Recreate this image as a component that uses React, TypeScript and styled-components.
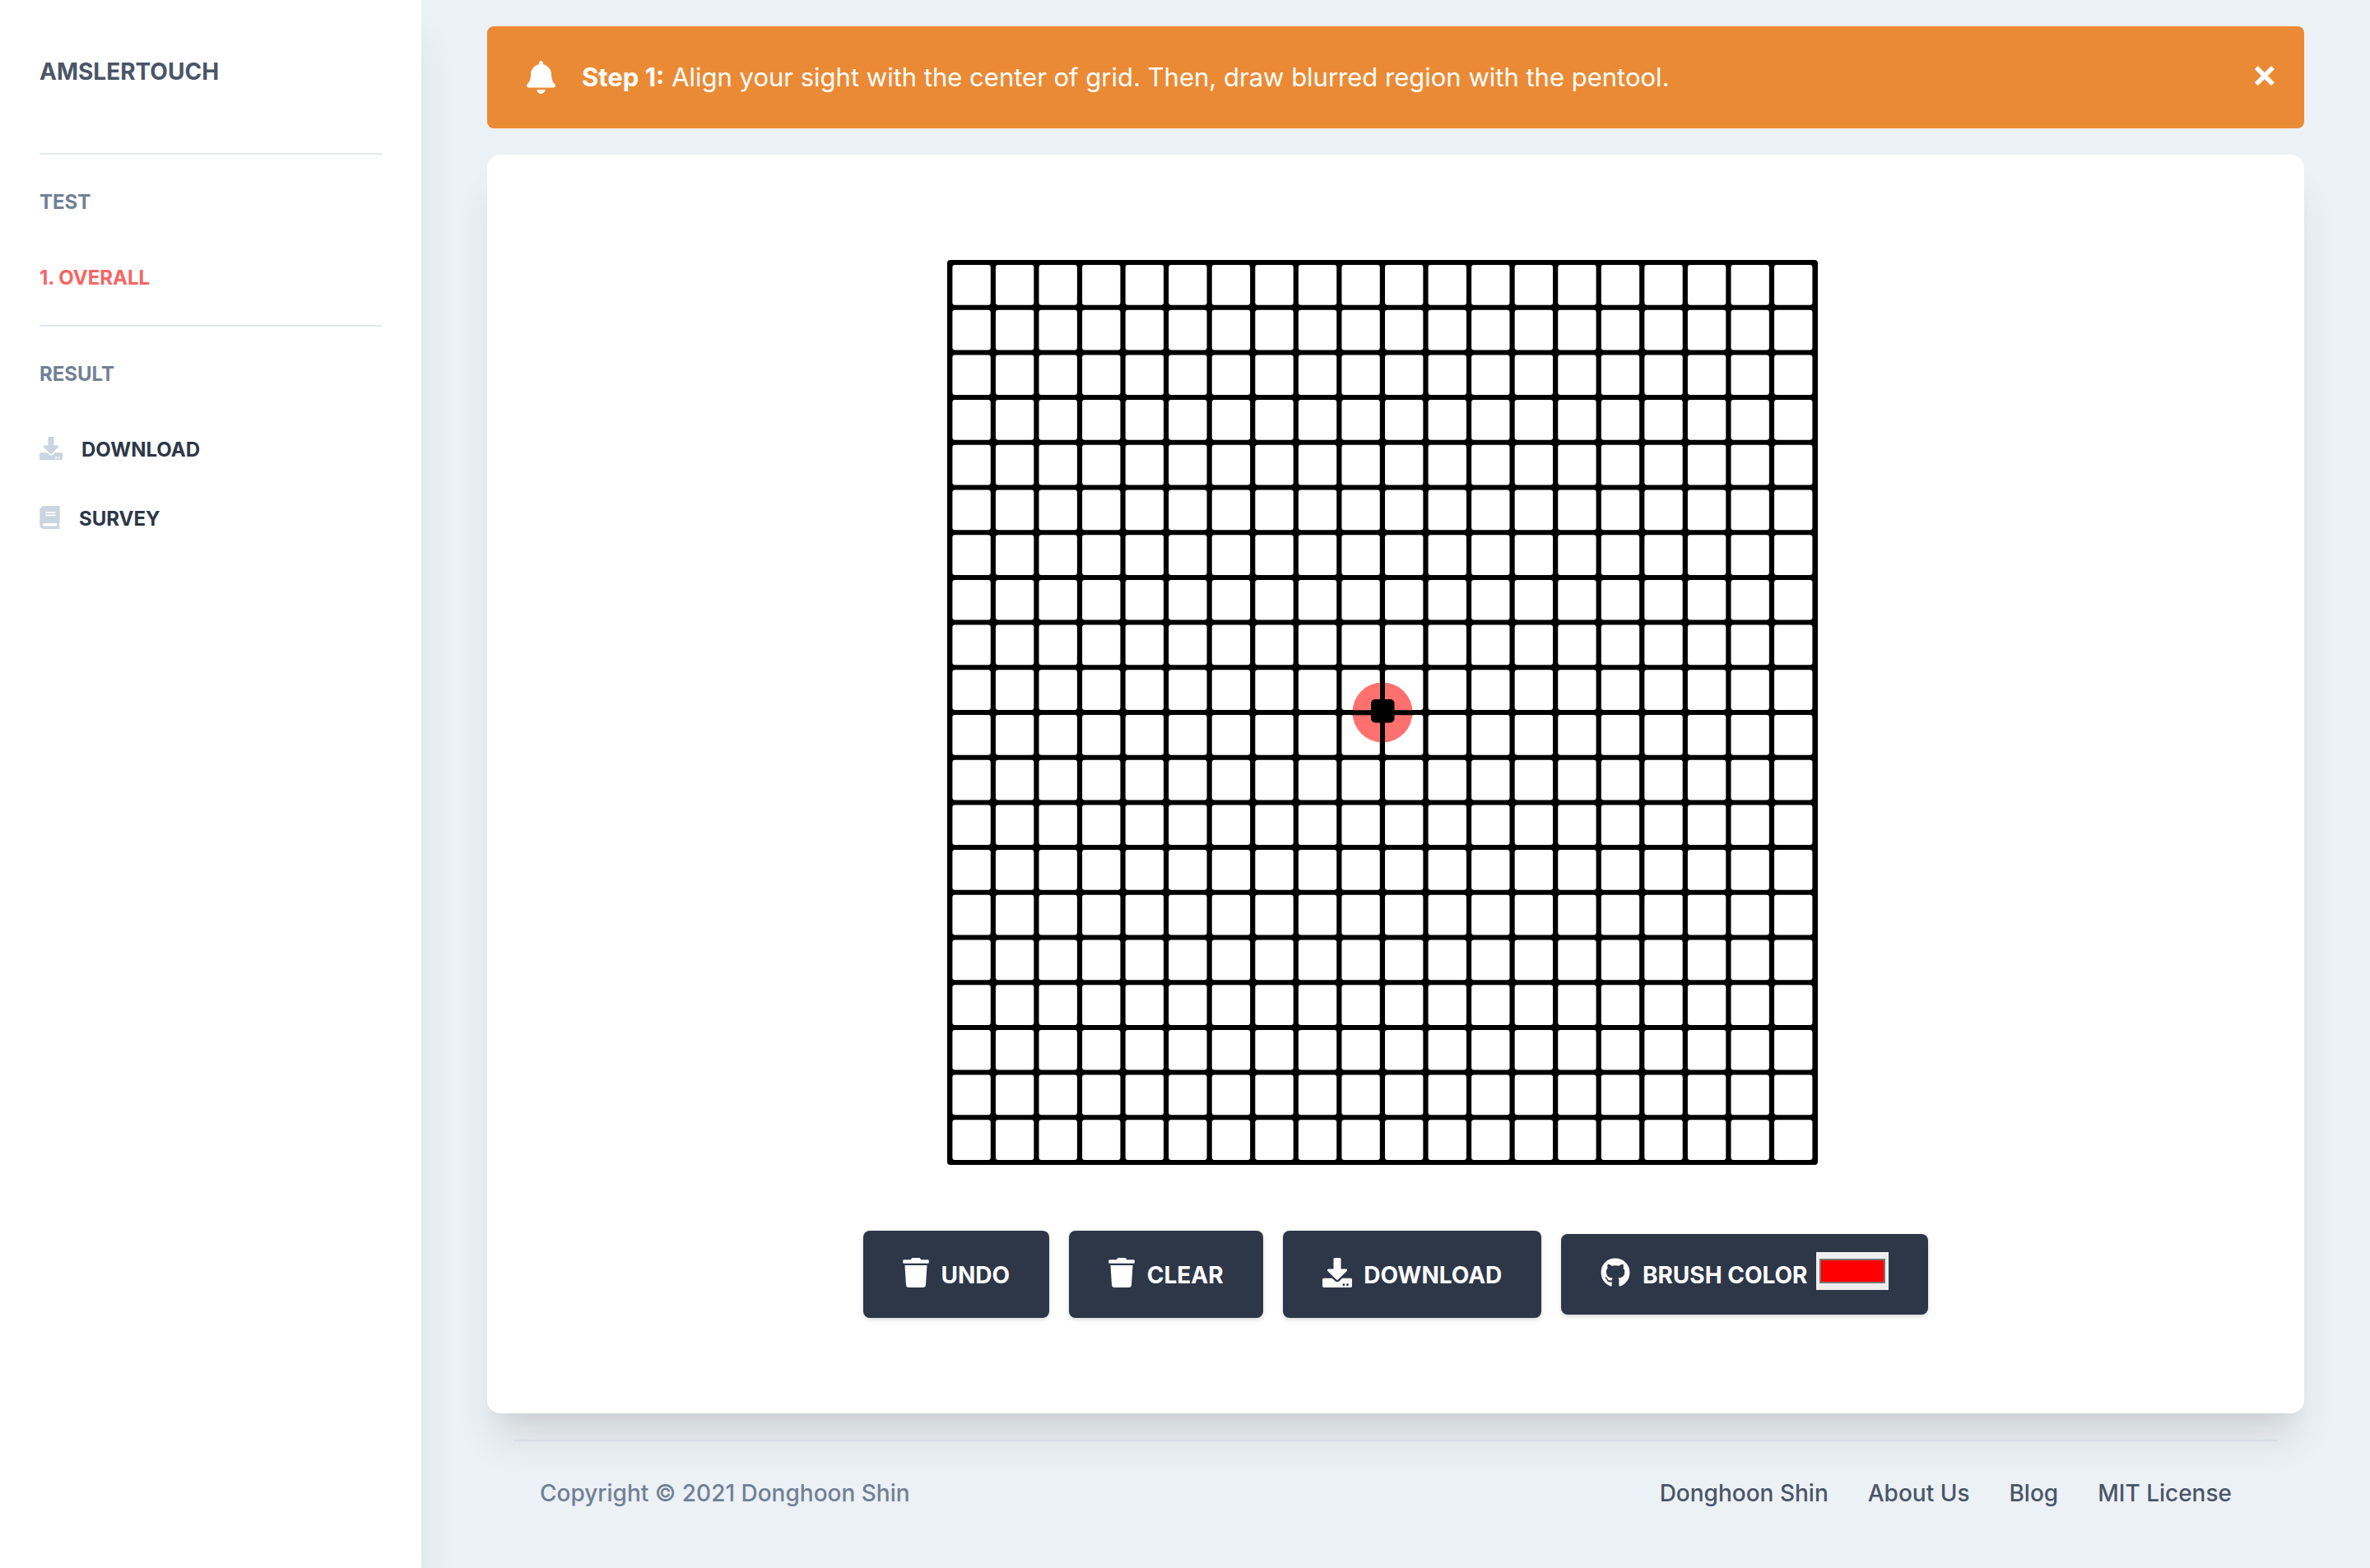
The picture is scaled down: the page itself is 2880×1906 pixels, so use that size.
import React, { useState } from "react";
import styled, { createGlobalStyle } from "styled-components";
import { FaBell, FaBook, FaDownload, FaGithub, FaTrash } from "react-icons/fa";

const GlobalStyle = createGlobalStyle`
  *, *::before, *::after { box-sizing: border-box; }
  body {
    margin: 0;
    background: #ecf1f5;
    color: #2d3748;
    font-family: Inter, "Liberation Sans", sans-serif;
    font-size: 28px;
    line-height: 42px;
  }
`;

const xlShadow = "0 40px 50px -10px rgba(0, 0, 0, 0.1), 0 20px 20px -10px rgba(0, 0, 0, 0.04)";

const Page = styled.div`
  display: flex;
  min-height: 100vh;
`;

const Sidebar = styled.nav`
  flex: none;
  width: 512px;
  padding: 66px 48px 32px;
  background: #fff;
  box-shadow: ${xlShadow};
`;

const Brand = styled.a`
  display: block;
  padding-bottom: 78px;
  color: #4a5568;
  font-weight: 700;
  text-decoration: none;
  text-transform: uppercase;
`;

const Divider = styled.hr<{ $color?: string }>`
  margin: 0;
  border: 0;
  border-top: 2px solid ${(p) => p.$color ?? "#e2e8f0"};
`;

const NavHeading = styled.h6`
  margin: 0;
  padding: 40px 0 32px;
  color: #718096;
  font-size: 24px;
  font-weight: 700;
  line-height: 36px;
  text-transform: uppercase;
`;

const NavList = styled.ul`
  margin: 0;
  padding: 0 0 15px;
  list-style: none;
`;

const NavLink = styled.a<{ $active?: boolean; $iconWidth?: number }>`
  display: flex;
  align-items: center;
  gap: 23px;
  padding: 24px 0;
  color: ${(p) => (p.$active ? "#f56565" : "#2d3748")};
  font-size: 24px;
  font-weight: 700;
  line-height: 36px;
  text-decoration: none;
  text-transform: uppercase;

  svg {
    width: ${(p) => p.$iconWidth ?? 28}px;
    height: 28px;
    margin-bottom: 4px;
    color: #cbd5e0;
  }
`;

const Main = styled.main`
  flex: 1;
  min-width: 0;
  padding: 32px 80px 0;
`;

const Alert = styled.div`
  display: flex;
  align-items: center;
  gap: 32px;
  margin-bottom: 32px;
  padding: 32px 32px 32px 48px;
  border-radius: 8px;
  background: #eb8a35;
  color: #fff;
  font-size: 31px;
  line-height: 60px;

  svg {
    width: 35px;
    height: 40px;
  }
`;

const AlertText = styled.span`
  flex: 1;
`;

const CloseButton = styled.button`
  align-self: flex-start;
  padding: 0;
  border: 0;
  background: none;
  color: #fff;
  font: 600 48px/50px Inter, sans-serif;
  cursor: pointer;
`;

const Card = styled.section`
  display: flex;
  flex-direction: column;
  align-items: center;
  gap: 80px;
  padding: 128px 32px 116px;
  border-radius: 16px;
  background: #fff;
  box-shadow: ${xlShadow};
`;

const Chart = styled.svg`
  display: block;
  width: 1100px;
  max-width: 100%;
`;

const Toolbar = styled.div`
  display: flex;
  flex-wrap: wrap;
  align-items: baseline;
  justify-content: center;
  gap: 24px;
`;

const toolStyle = `
  border: 0;
  border-radius: 8px;
  background: #2d3748;
  box-shadow: 0 2px 6px rgba(0, 0, 0, 0.1), 0 2px 4px rgba(0, 0, 0, 0.06);
  color: #fff;
  font: 700 28px/42px Inter, sans-serif;
  text-transform: uppercase;
  white-space: nowrap;
  cursor: pointer;

  svg {
    height: 36px;
    margin-right: 8px;
    vertical-align: -5px;
  }
`;

const ToolButton = styled.button<{ $iconWidth?: number }>`
  ${toolStyle}
  padding: 33px 48px 31px;

  svg {
    width: ${(p) => p.$iconWidth ?? 36}px;
  }
`;

const ColorTool = styled.label`
  ${toolStyle}
  padding: 22px 48px 27px;

  svg {
    width: 36px;
  }
`;

const ColorInput = styled.input`
  appearance: none;
  width: 88px;
  height: 46px;
  margin: 0 0 0 4px;
  padding: 0;
  border: 0;
  background: #efefef;
  vertical-align: baseline;

  &::-webkit-color-swatch-wrapper { padding: 8px 4px; }
  &::-webkit-color-swatch { border: 2px solid #767676; }
`;

const Footer = styled.footer`
  padding: 32px 32px 0;
`;

const FooterRow = styled.div`
  display: flex;
  align-items: center;
  justify-content: space-between;
  padding: 42px 56px 40px 32px;
  color: #718096;
  font-weight: 500;
`;

const FooterLinks = styled.ul`
  display: flex;
  gap: 48px;
  margin: 0;
  padding: 0;
  list-style: none;
`;

const FooterLink = styled.a`
  color: #4a5568;
  text-decoration: none;
`;

const CELLS = 20;
const PITCH_X = 52.56;
const PITCH_Y = 54.7;

function AmslerGrid() {
  const cells: React.ReactNode[] = [];
  for (let row = 0; row < CELLS; row++) {
    for (let col = 0; col < CELLS; col++) {
      cells.push(
        <rect
          key={`${row}-${col}`}
          x={8.3 + col * PITCH_X + 3.1}
          y={3 + row * PITCH_Y + 3}
          width={PITCH_X - 6.2}
          height={PITCH_Y - 6}
          rx={3}
        />
      );
    }
  }
  return (
    <Chart viewBox="0 0 1100 1100" role="img" aria-label="Amsler grid">
      <rect x="5" y="0" width="1058" height="1100" rx="4" fill="#000" />
      <g fill="#fff">{cells}</g>
      <circle cx="534" cy="550" r="36.5" fill="#ff716e" />
      <path d="M534 512V588M496 550.2H572" stroke="#000" strokeWidth="6" />
      <rect x="520" y="534" width="28.5" height="28.5" rx="5" fill="#000" />
    </Chart>
  );
}

const footerLinks = ["Donghoon Shin", "About Us", "Blog", "MIT License"];

export default function App() {
  const [color, setColor] = useState("#ff0000");
  const [alertOpen, setAlertOpen] = useState(true);

  return (
    <>
      <GlobalStyle />
      <Page>
        <Sidebar>
          <Brand href="#">AmslerTouch</Brand>
          <Divider />
          <NavHeading>Test</NavHeading>
          <NavList>
            <li><NavLink href="#overall" $active>1. Overall</NavLink></li>
          </NavList>
          <Divider />
          <NavHeading>Result</NavHeading>
          <NavList>
            <li><NavLink href="#download"><FaDownload />Download</NavLink></li>
            <li><NavLink href="#survey" $iconWidth={25}><FaBook />Survey</NavLink></li>
          </NavList>
        </Sidebar>
        <Main>
          {alertOpen && (
            <Alert role="alert">
              <FaBell />
              <AlertText>
                <b>Step 1:</b> Align your sight with the center of grid. Then, draw blurred region with the pentool.
              </AlertText>
              <CloseButton type="button" aria-label="Close" onClick={() => setAlertOpen(false)}>×</CloseButton>
            </Alert>
          )}
          <Card>
            <AmslerGrid />
            <Toolbar>
              <ToolButton type="button" $iconWidth={32}><FaTrash /> Undo</ToolButton>
              <ToolButton type="button" $iconWidth={32}><FaTrash /> Clear</ToolButton>
              <ToolButton type="button"><FaDownload /> Download</ToolButton>
              <ColorTool>
                <FaGithub /> Brush Color{" "}
                <ColorInput type="color" value={color} onChange={(e) => setColor(e.target.value)} />
              </ColorTool>
            </Toolbar>
          </Card>
          <Footer>
            <Divider $color="#d8dee6" />
            <FooterRow>
              <span>Copyright © 2021 Donghoon Shin</span>
              <FooterLinks>
                {footerLinks.map((name) => (
                  <li key={name}><FooterLink href="#">{name}</FooterLink></li>
                ))}
              </FooterLinks>
            </FooterRow>
          </Footer>
        </Main>
      </Page>
    </>
  );
}
